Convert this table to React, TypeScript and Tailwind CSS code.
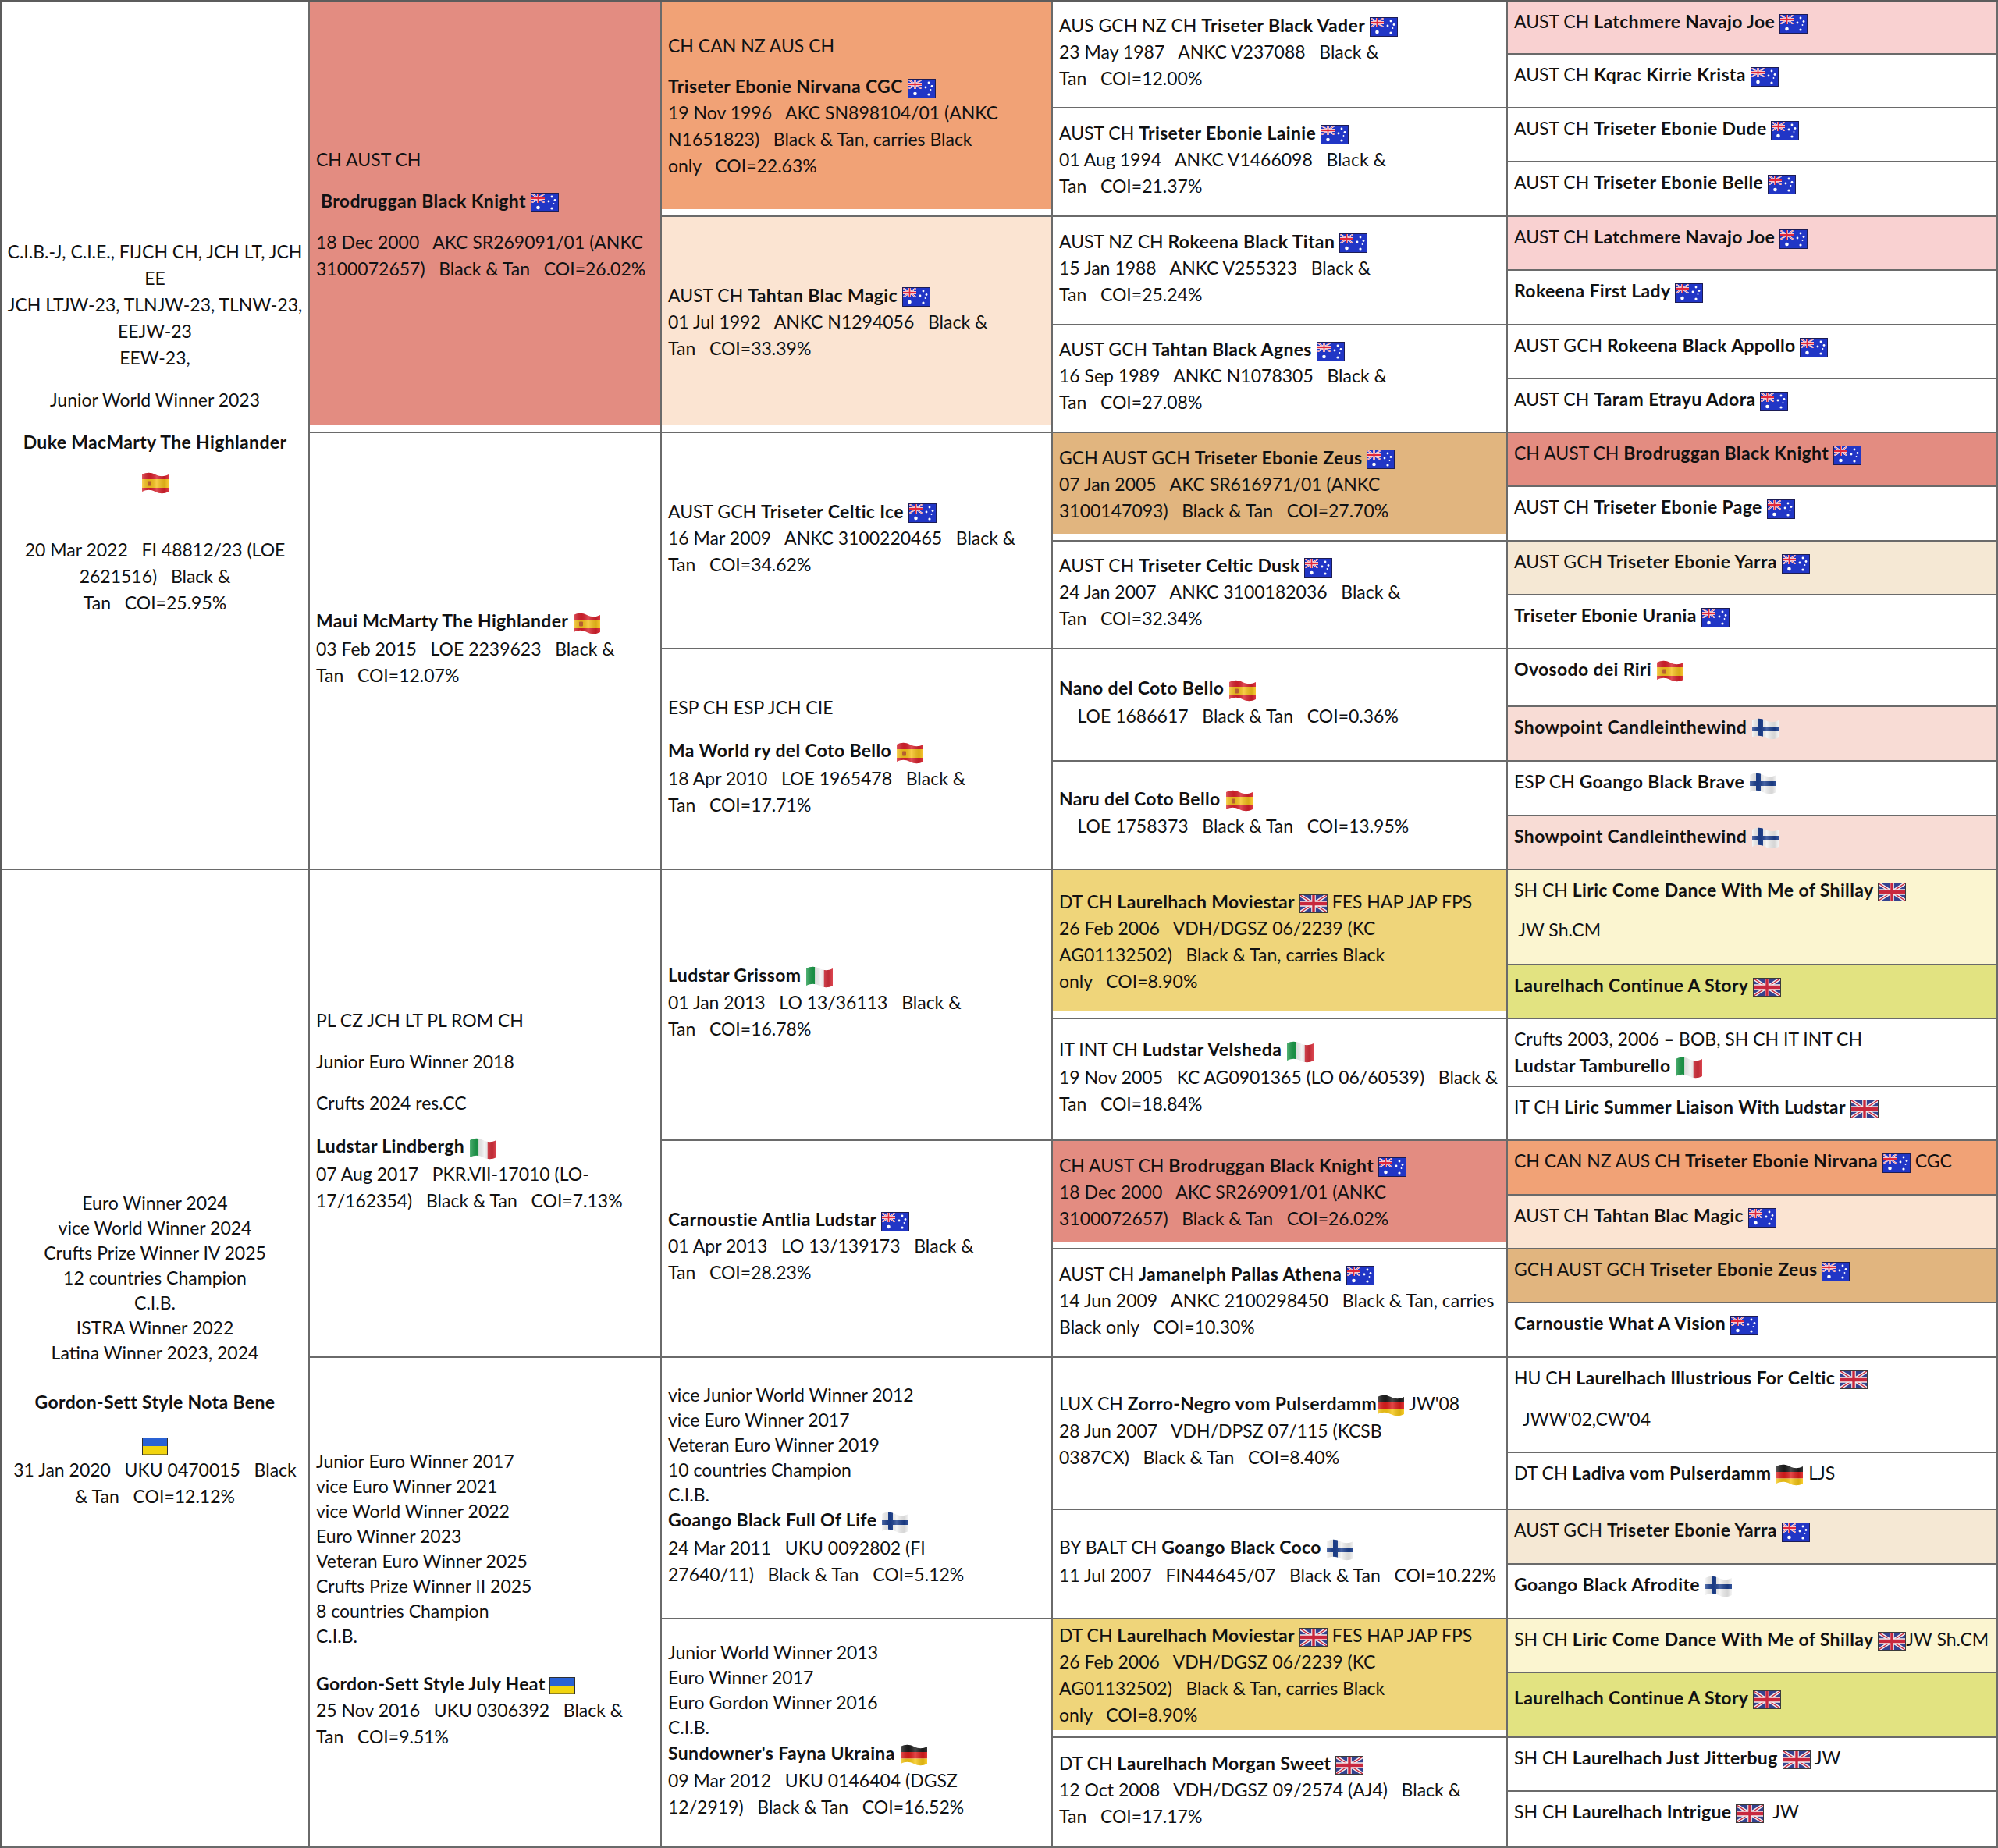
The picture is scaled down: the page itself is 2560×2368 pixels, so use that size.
import React from "react";

type FlagKind = "au" | "uk" | "it" | "es" | "fi" | "de" | "ua";

const S = "\u00a0\u00a0\u00a0";
const S4 = "\u00a0\u00a0\u00a0\u00a0";

const ROW_START = [
  "row-start-1", "row-start-2", "row-start-3", "row-start-4", "row-start-5", "row-start-6", "row-start-7", "row-start-8",
  "row-start-9", "row-start-10", "row-start-11", "row-start-12", "row-start-13", "row-start-14", "row-start-15", "row-start-16",
  "row-start-17", "row-start-18", "row-start-19", "row-start-20", "row-start-21", "row-start-22", "row-start-23", "row-start-24",
  "row-start-25", "row-start-26", "row-start-27", "row-start-28", "row-start-29", "row-start-30", "row-start-31", "row-start-32",
];
const COL_START = ["col-start-1", "col-start-2", "col-start-3", "col-start-4", "col-start-5"];
const ROW_SPAN: Record<number, string> = { 1: "row-span-1", 2: "row-span-2", 4: "row-span-4", 8: "row-span-8", 16: "row-span-16" };

// cell colours
const SALMON = "bg-[#e38c81]";
const NIRVANA = "bg-[#f1a276]";
const PEACH = "bg-[#fbe4d2]";
const PINK = "bg-[#f9d1d1]";
const TAN = "bg-[#e1b57f]";
const BEIGE = "bg-[#f5e8d4]";
const SHOW = "bg-[#f8dcd5]";
const YELLOW = "bg-[#efd57a]";
const PALE = "bg-[#fbf5d0]";
const LIME = "bg-[#e2e381]";

const WAVE = "M1 4 C7 1 12 1 18 4 S29 7 35 4 V26 C29 29 24 29 18 26 S7 23 1 26 Z";

function Shade() {
  return (
    <>
      <defs>
        <linearGradient id="flagShade" x1="0" y1="0" x2="1" y2="0">
          <stop offset="0" stopColor="#fff" stopOpacity="0.25" />
          <stop offset="0.3" stopColor="#000" stopOpacity="0.08" />
          <stop offset="0.55" stopColor="#fff" stopOpacity="0.2" />
          <stop offset="0.85" stopColor="#000" stopOpacity="0.12" />
          <stop offset="1" stopColor="#fff" stopOpacity="0.1" />
        </linearGradient>
      </defs>
      <path d={WAVE} fill="url(#flagShade)" />
    </>
  );
}

function Flag({ kind }: { kind: FlagKind }) {
  if (kind === "au") {
    return (
      <svg width="36" height="25" viewBox="0 0 36 25" className="inline-block">
        <rect x="0.5" y="0.5" width="35" height="24" fill="#2136c6" stroke="#1c1c55" />
        <svg x="1" y="1" width="17" height="12" viewBox="0 0 60 30" preserveAspectRatio="none">
          <rect width="60" height="30" fill="#2136c6" />
          <path d="M0,0 L60,30 M60,0 L0,30" stroke="#fff" strokeWidth="6" />
          <path d="M0,0 L60,30 M60,0 L0,30" stroke="#e0283c" strokeWidth="2" />
          <path d="M30,0 V30 M0,15 H60" stroke="#fff" strokeWidth="10" />
          <path d="M30,0 V30 M0,15 H60" stroke="#e0283c" strokeWidth="6" />
        </svg>
        <circle cx="9.5" cy="19" r="2.3" fill="#fff" />
        <circle cx="27" cy="5" r="1.4" fill="#fff" />
        <circle cx="23" cy="11" r="1.4" fill="#fff" />
        <circle cx="31" cy="9.5" r="1.4" fill="#fff" />
        <circle cx="27" cy="20" r="1.6" fill="#fff" />
        <circle cx="29.5" cy="14" r="0.9" fill="#fff" />
      </svg>
    );
  }
  if (kind === "uk") {
    return (
      <svg width="36" height="24" viewBox="0 0 36 24" className="inline-block">
        <rect x="0.5" y="0.5" width="35" height="23" fill="#34428f" stroke="#3a3a3a" />
        <svg x="1" y="1" width="34" height="22" viewBox="0 0 60 30" preserveAspectRatio="none">
          <path d="M0,0 L60,30 M60,0 L0,30" stroke="#f4eef0" strokeWidth="6" />
          <path d="M0,0 L60,30 M60,0 L0,30" stroke="#c8283e" strokeWidth="2" />
          <path d="M30,0 V30 M0,15 H60" stroke="#f4eef0" strokeWidth="10" />
          <path d="M30,0 V30 M0,15 H60" stroke="#c8283e" strokeWidth="6" />
        </svg>
      </svg>
    );
  }
  if (kind === "ua") {
    return (
      <svg width="33" height="22" viewBox="0 0 33 22" className="inline-block">
        <rect x="0.5" y="0.5" width="32" height="21" fill="#2a62d4" stroke="#2f2f2f" />
        <rect x="1" y="11" width="31" height="10.5" fill="#f1d40f" />
      </svg>
    );
  }
  const clip = `wave-${kind}`;
  return (
    <svg width="36" height="30" viewBox="0 0 36 30" className="inline-block">
      <defs>
        <clipPath id={clip}>
          <path d={WAVE} />
        </clipPath>
      </defs>
      <g clipPath={`url(#${clip})`}>
        {kind === "it" && (
          <>
            <rect x="0" y="0" width="12.3" height="30" fill="#1a9a48" />
            <rect x="12.3" y="0" width="11.4" height="30" fill="#f2f2f2" />
            <rect x="23.7" y="0" width="12.3" height="30" fill="#d7303c" />
          </>
        )}
        {kind === "es" && (
          <>
            <rect x="0" y="0" width="36" height="30" fill="#d8202c" />
            <rect x="0" y="10" width="36" height="11" fill="#f7c21b" />
            <rect x="8" y="12.5" width="5" height="6" rx="1" fill="#b5473a" opacity="0.75" />
          </>
        )}
        {kind === "de" && (
          <>
            <rect x="0" y="0" width="36" height="11" fill="#1d1d1d" />
            <rect x="0" y="11" width="36" height="8.5" fill="#dd1d1d" />
            <rect x="0" y="19.5" width="36" height="11" fill="#f8c813" />
          </>
        )}
        {kind === "fi" && (
          <>
            <rect x="0" y="0" width="36" height="30" fill="#f3f3f3" />
            <rect x="9" y="0" width="6" height="30" fill="#1b3f8f" />
            <rect x="0" y="12" width="36" height="6" fill="#1b3f8f" />
          </>
        )}
      </g>
      <Shade />
    </svg>
  );
}

function L({ className = "", children }: { className?: string; children?: React.ReactNode }) {
  return <div className={`whitespace-nowrap leading-[34px] ${className}`}>{children}</div>;
}

function A({ className = "", children }: { className?: string; children?: React.ReactNode }) {
  return <div className={`whitespace-nowrap leading-[32px] ${className}`}>{children}</div>;
}

function Gen1({ row, children }: { row: number; children: React.ReactNode }) {
  return (
    <div
      className={`col-start-1 ${ROW_START[row]} ${ROW_SPAN[16]} flex flex-col justify-center overflow-hidden border-r-2 border-b-2 border-[#6a6a6a] px-[4px] pb-[22px] text-center`}
    >
      {children}
    </div>
  );
}

function Mid({
  col,
  row,
  span,
  bg = "bg-white",
  children,
}: {
  col: number;
  row: number;
  span: number;
  bg?: string;
  children: React.ReactNode;
}) {
  return (
    <div className={`${COL_START[col]} ${ROW_START[row]} ${ROW_SPAN[span]} flex flex-col overflow-hidden border-r-2 border-b-2 border-[#6a6a6a] pb-[8px]`}>
      <div className={`flex flex-1 flex-col justify-center px-[8px] ${bg}`}>{children}</div>
    </div>
  );
}

function Leaf({ row, bg = "bg-white", children }: { row: number; bg?: string; children: React.ReactNode }) {
  return (
    <div className={`col-start-5 ${ROW_START[row]} overflow-hidden border-r-2 border-b-2 border-[#6a6a6a] px-[8px] pt-[8px] ${bg}`}>
      {children}
    </div>
  );
}

function Moviestar() {
  return (
    <>
      <L>
        DT CH <b>Laurelhach Moviestar</b> <Flag kind="uk" /> FES HAP JAP FPS
      </L>
      <L>26 Feb 2006{S}VDH/DGSZ 06/2239 (KC</L>
      <L>AG01132502){S}Black &amp; Tan, carries Black</L>
      <L>only{S}COI=8.90%</L>
    </>
  );
}

const leaves: { bg?: string; body: React.ReactNode }[] = [
  { bg: PINK, body: <L>AUST CH <b>Latchmere Navajo Joe</b> <Flag kind="au" /></L> },
  { body: <L>AUST CH <b>Kqrac Kirrie Krista</b> <Flag kind="au" /></L> },
  { body: <L>AUST CH <b>Triseter Ebonie Dude</b> <Flag kind="au" /></L> },
  { body: <L>AUST CH <b>Triseter Ebonie Belle</b> <Flag kind="au" /></L> },
  { bg: PINK, body: <L>AUST CH <b>Latchmere Navajo Joe</b> <Flag kind="au" /></L> },
  { body: <L><b>Rokeena First Lady</b> <Flag kind="au" /></L> },
  { body: <L>AUST GCH <b>Rokeena Black Appollo</b> <Flag kind="au" /></L> },
  { body: <L>AUST CH <b>Taram Etrayu Adora</b> <Flag kind="au" /></L> },
  { bg: SALMON, body: <L>CH AUST CH <b>Brodruggan Black Knight</b> <Flag kind="au" /></L> },
  { body: <L>AUST CH <b>Triseter Ebonie Page</b> <Flag kind="au" /></L> },
  { bg: BEIGE, body: <L>AUST GCH <b>Triseter Ebonie Yarra</b> <Flag kind="au" /></L> },
  { body: <L><b>Triseter Ebonie Urania</b> <Flag kind="au" /></L> },
  { body: <L><b>Ovosodo dei Riri</b> <Flag kind="es" /></L> },
  { bg: SHOW, body: <L><b>Showpoint Candleinthewind</b> <Flag kind="fi" /></L> },
  { body: <L>ESP CH <b>Goango Black Brave</b> <Flag kind="fi" /></L> },
  { bg: SHOW, body: <L><b>Showpoint Candleinthewind</b> <Flag kind="fi" /></L> },
  {
    bg: PALE,
    body: (
      <>
        <L>SH CH <b>Liric Come Dance With Me of Shillay</b> <Flag kind="uk" /></L>
        <L className="mt-[17px]">{"\u00a0"}JW Sh.CM</L>
      </>
    ),
  },
  { bg: LIME, body: <L><b>Laurelhach Continue A Story</b> <Flag kind="uk" /></L> },
  {
    body: (
      <>
        <L>Crufts 2003, 2006 – BOB, SH CH IT INT CH</L>
        <L><b>Ludstar Tamburello</b> <Flag kind="it" /></L>
      </>
    ),
  },
  { body: <L>IT CH <b>Liric Summer Liaison With Ludstar</b> <Flag kind="uk" /></L> },
  { bg: NIRVANA, body: <L>CH CAN NZ AUS CH <b>Triseter Ebonie Nirvana</b> <Flag kind="au" /> CGC</L> },
  { bg: PEACH, body: <L>AUST CH <b>Tahtan Blac Magic</b> <Flag kind="au" /></L> },
  { bg: TAN, body: <L>GCH AUST GCH <b>Triseter Ebonie Zeus</b> <Flag kind="au" /></L> },
  { body: <L><b>Carnoustie What A Vision</b> <Flag kind="au" /></L> },
  {
    body: (
      <>
        <L>HU CH <b>Laurelhach Illustrious For Celtic</b> <Flag kind="uk" /></L>
        <L className="mt-[19px]">{"\u00a0\u00a0"}JWW'02,CW'04</L>
      </>
    ),
  },
  { body: <L>DT CH <b>Ladiva vom Pulserdamm</b> <Flag kind="de" /> LJS</L> },
  { bg: BEIGE, body: <L>AUST GCH <b>Triseter Ebonie Yarra</b> <Flag kind="au" /></L> },
  { body: <L><b>Goango Black Afrodite</b> <Flag kind="fi" /></L> },
  { bg: PALE, body: <L>SH CH <b>Liric Come Dance With Me of Shillay</b> <Flag kind="uk" />JW Sh.CM</L> },
  { bg: LIME, body: <L className="mt-[6px]"><b>Laurelhach Continue A Story</b> <Flag kind="uk" /></L> },
  { body: <L>SH CH <b>Laurelhach Just Jitterbug</b> <Flag kind="uk" /> JW</L> },
  { body: <L>SH CH <b>Laurelhach Intrigue</b> <Flag kind="uk" />{"\u00a0 "}JW</L> },
];

export default function App() {
  return (
    <div className="grid w-[2560px] grid-cols-[395px_451px_501px_583px_628px] grid-rows-[68px_69px_69px_70px_69px_70px_69px_69px_69px_70px_69px_69px_74px_70px_70px_69px_122px_69px_87px_69px_70px_69px_69px_70px_122px_73px_70px_70px_69px_83px_69px_72px] border-t-2 border-l-2 border-[#5c5c5c] bg-white font-['Lato',sans-serif] text-[23px] text-[#111] [&_b]:tracking-[0.35px]">
      {/* generation 1 */}
      <Gen1 row={0}>
        <L>C.I.B.-J, C.I.E., FIJCH CH, JCH LT, JCH</L>
        <L>EE</L>
        <L>JCH LTJW-23, TLNJW-23, TLNW-23,</L>
        <L>EEJW-23</L>
        <L>EEW-23,</L>
        <L className="mt-[20px]">Junior World Winner 2023</L>
        <L className="mt-[20px] font-bold tracking-[0.35px]">Duke MacMarty The Highlander</L>
        <div className="mt-[21px] flex justify-center">
          <Flag kind="es" />
        </div>
        <L className="mt-[53px]">20 Mar 2022{S}FI 48812/23 (LOE</L>
        <L>2621516){S}Black &amp;</L>
        <L>Tan{S}COI=25.95%</L>
      </Gen1>
      <Gen1 row={16}>
        <A>Euro Winner 2024</A>
        <A>vice World Winner 2024</A>
        <A>Crufts Prize Winner IV 2025</A>
        <A>12 countries Champion</A>
        <A>C.I.B.</A>
        <A>ISTRA Winner 2022</A>
        <A>Latina Winner 2023, 2024</A>
        <L className="mt-[30px] font-bold tracking-[0.35px]">Gordon-Sett Style Nota Bene</L>
        <div className="mt-[29px] flex justify-center">
          <Flag kind="ua" />
        </div>
        <L className="mt-[2px]">31 Jan 2020{S}UKU 0470015{S}Black</L>
        <L>&amp; Tan{S}COI=12.12%</L>
      </Gen1>

      {/* generation 2 */}
      <Mid col={1} row={0} span={8} bg={SALMON}>
        <L>CH AUST CH</L>
        <L className="mt-[19px]">
          <b>{"\u00a0"}Brodruggan Black Knight</b> <Flag kind="au" />
        </L>
        <L className="mt-[19px]">18 Dec 2000{S}AKC SR269091/01 (ANKC</L>
        <L>3100072657){S}Black &amp; Tan{S}COI=26.02%</L>
      </Mid>
      <Mid col={1} row={8} span={8}>
        <L>
          <b>Maui McMarty The Highlander</b> <Flag kind="es" />
        </L>
        <L>03 Feb 2015{S}LOE 2239623{S}Black &amp;</L>
        <L>Tan{S}COI=12.07%</L>
      </Mid>
      <Mid col={1} row={16} span={8}>
        <L>PL CZ JCH LT PL ROM CH</L>
        <L className="mt-[19px]">Junior Euro Winner 2018</L>
        <L className="mt-[19px]">Crufts 2024 res.CC</L>
        <L className="mt-[21px]">
          <b>Ludstar Lindbergh</b> <Flag kind="it" />
        </L>
        <L>07 Aug 2017{S}PKR.VII-17010 (LO-</L>
        <L>17/162354){S}Black &amp; Tan{S}COI=7.13%</L>
      </Mid>
      <Mid col={1} row={24} span={8}>
        <A>Junior Euro Winner 2017</A>
        <A>vice Euro Winner 2021</A>
        <A>vice World Winner 2022</A>
        <A>Euro Winner 2023</A>
        <A>Veteran Euro Winner 2025</A>
        <A>Crufts Prize Winner II 2025</A>
        <A>8 countries Champion</A>
        <A>C.I.B.</A>
        <L className="mt-[28px]">
          <b>Gordon-Sett Style July Heat</b> <Flag kind="ua" />
        </L>
        <L>25 Nov 2016{S}UKU 0306392{S}Black &amp;</L>
        <L>Tan{S}COI=9.51%</L>
      </Mid>

      {/* generation 3 */}
      <Mid col={2} row={0} span={4} bg={NIRVANA}>
        <L>CH CAN NZ AUS CH</L>
        <L className="mt-[18px]">
          <b>Triseter Ebonie Nirvana CGC</b> <Flag kind="au" />
        </L>
        <L>19 Nov 1996{S}AKC SN898104/01 (ANKC</L>
        <L>N1651823){S}Black &amp; Tan, carries Black</L>
        <L>only{S}COI=22.63%</L>
      </Mid>
      <Mid col={2} row={4} span={4} bg={PEACH}>
        <L>
          AUST CH <b>Tahtan Blac Magic</b> <Flag kind="au" />
        </L>
        <L>01 Jul 1992{S}ANKC N1294056{S}Black &amp;</L>
        <L>Tan{S}COI=33.39%</L>
      </Mid>
      <Mid col={2} row={8} span={4}>
        <L>
          AUST GCH <b>Triseter Celtic Ice</b> <Flag kind="au" />
        </L>
        <L>16 Mar 2009{S}ANKC 3100220465{S}Black &amp;</L>
        <L>Tan{S}COI=34.62%</L>
      </Mid>
      <Mid col={2} row={12} span={4}>
        <L>ESP CH ESP JCH CIE</L>
        <L className="mt-[21px]">
          <b>Ma World ry del Coto Bello</b> <Flag kind="es" />
        </L>
        <L>18 Apr 2010{S}LOE 1965478{S}Black &amp;</L>
        <L>Tan{S}COI=17.71%</L>
      </Mid>
      <Mid col={2} row={16} span={4}>
        <L>
          <b>Ludstar Grissom</b> <Flag kind="it" />
        </L>
        <L>01 Jan 2013{S}LO 13/36113{S}Black &amp;</L>
        <L>Tan{S}COI=16.78%</L>
      </Mid>
      <Mid col={2} row={20} span={4}>
        <L>
          <b>Carnoustie Antlia Ludstar</b> <Flag kind="au" />
        </L>
        <L>01 Apr 2013{S}LO 13/139173{S}Black &amp;</L>
        <L>Tan{S}COI=28.23%</L>
      </Mid>
      <Mid col={2} row={24} span={4}>
        <A>vice Junior World Winner 2012</A>
        <A>vice Euro Winner 2017</A>
        <A>Veteran Euro Winner 2019</A>
        <A>10 countries Champion</A>
        <A>C.I.B.</A>
        <A>
          <b>Goango Black Full Of Life</b> <Flag kind="fi" />
        </A>
        <L>24 Mar 2011{S}UKU 0092802 (FI</L>
        <L>27640/11){S}Black &amp; Tan{S}COI=5.12%</L>
      </Mid>
      <Mid col={2} row={28} span={4}>
        <A>Junior World Winner 2013</A>
        <A>Euro Winner 2017</A>
        <A>Euro Gordon Winner 2016</A>
        <A>C.I.B.</A>
        <L>
          <b>Sundowner's Fayna Ukraina</b> <Flag kind="de" />
        </L>
        <L>09 Mar 2012{S}UKU 0146404 (DGSZ</L>
        <L>12/2919){S}Black &amp; Tan{S}COI=16.52%</L>
      </Mid>

      {/* generation 4 */}
      <Mid col={3} row={0} span={2}>
        <L>
          AUS GCH NZ CH <b>Triseter Black Vader</b> <Flag kind="au" />
        </L>
        <L>23 May 1987{S}ANKC V237088{S}Black &amp;</L>
        <L>Tan{S}COI=12.00%</L>
      </Mid>
      <Mid col={3} row={2} span={2}>
        <L>
          AUST CH <b>Triseter Ebonie Lainie</b> <Flag kind="au" />
        </L>
        <L>01 Aug 1994{S}ANKC V1466098{S}Black &amp;</L>
        <L>Tan{S}COI=21.37%</L>
      </Mid>
      <Mid col={3} row={4} span={2}>
        <L>
          AUST NZ CH <b>Rokeena Black Titan</b> <Flag kind="au" />
        </L>
        <L>15 Jan 1988{S}ANKC V255323{S}Black &amp;</L>
        <L>Tan{S}COI=25.24%</L>
      </Mid>
      <Mid col={3} row={6} span={2}>
        <L>
          AUST GCH <b>Tahtan Black Agnes</b> <Flag kind="au" />
        </L>
        <L>16 Sep 1989{S}ANKC N1078305{S}Black &amp;</L>
        <L>Tan{S}COI=27.08%</L>
      </Mid>
      <Mid col={3} row={8} span={2} bg={TAN}>
        <L>
          GCH AUST GCH <b>Triseter Ebonie Zeus</b> <Flag kind="au" />
        </L>
        <L>07 Jan 2005{S}AKC SR616971/01 (ANKC</L>
        <L>3100147093){S}Black &amp; Tan{S}COI=27.70%</L>
      </Mid>
      <Mid col={3} row={10} span={2}>
        <L>
          AUST CH <b>Triseter Celtic Dusk</b> <Flag kind="au" />
        </L>
        <L>24 Jan 2007{S}ANKC 3100182036{S}Black &amp;</L>
        <L>Tan{S}COI=32.34%</L>
      </Mid>
      <Mid col={3} row={12} span={2}>
        <L>
          <b>Nano del Coto Bello</b> <Flag kind="es" />
        </L>
        <L>{S4}LOE 1686617{S}Black &amp; Tan{S}COI=0.36%</L>
      </Mid>
      <Mid col={3} row={14} span={2}>
        <L>
          <b>Naru del Coto Bello</b> <Flag kind="es" />
        </L>
        <L>{S4}LOE 1758373{S}Black &amp; Tan{S}COI=13.95%</L>
      </Mid>
      <Mid col={3} row={16} span={2} bg={YELLOW}>
        <Moviestar />
      </Mid>
      <Mid col={3} row={18} span={2}>
        <L>
          IT INT CH <b>Ludstar Velsheda</b> <Flag kind="it" />
        </L>
        <L>19 Nov 2005{S}KC AG0901365 (LO 06/60539){S}Black &amp;</L>
        <L>Tan{S}COI=18.84%</L>
      </Mid>
      <Mid col={3} row={20} span={2} bg={SALMON}>
        <L>
          CH AUST CH <b>Brodruggan Black Knight</b> <Flag kind="au" />
        </L>
        <L>18 Dec 2000{S}AKC SR269091/01 (ANKC</L>
        <L>3100072657){S}Black &amp; Tan{S}COI=26.02%</L>
      </Mid>
      <Mid col={3} row={22} span={2}>
        <L>
          AUST CH <b>Jamanelph Pallas Athena</b> <Flag kind="au" />
        </L>
        <L>14 Jun 2009{S}ANKC 2100298450{S}Black &amp; Tan, carries</L>
        <L>Black only{S}COI=10.30%</L>
      </Mid>
      <Mid col={3} row={24} span={2}>
        <L>
          LUX CH <b>Zorro-Negro vom Pulserdamm</b>
          <Flag kind="de" /> JW'08
        </L>
        <L>28 Jun 2007{S}VDH/DPSZ 07/115 (KCSB</L>
        <L>0387CX){S}Black &amp; Tan{S}COI=8.40%</L>
      </Mid>
      <Mid col={3} row={26} span={2}>
        <L>
          BY BALT CH <b>Goango Black Coco</b> <Flag kind="fi" />
        </L>
        <L>11 Jul 2007{S}FIN44645/07{S}Black &amp; Tan{S}COI=10.22%</L>
      </Mid>
      <Mid col={3} row={28} span={2} bg={YELLOW}>
        <Moviestar />
      </Mid>
      <Mid col={3} row={30} span={2}>
        <L>
          DT CH <b>Laurelhach Morgan Sweet</b> <Flag kind="uk" />
        </L>
        <L>12 Oct 2008{S}VDH/DGSZ 09/2574 (AJ4){S}Black &amp;</L>
        <L>Tan{S}COI=17.17%</L>
      </Mid>

      {/* generation 5 */}
      {leaves.map((leaf, i) => (
        <Leaf key={i} row={i} bg={leaf.bg}>
          {leaf.body}
        </Leaf>
      ))}
    </div>
  );
}
